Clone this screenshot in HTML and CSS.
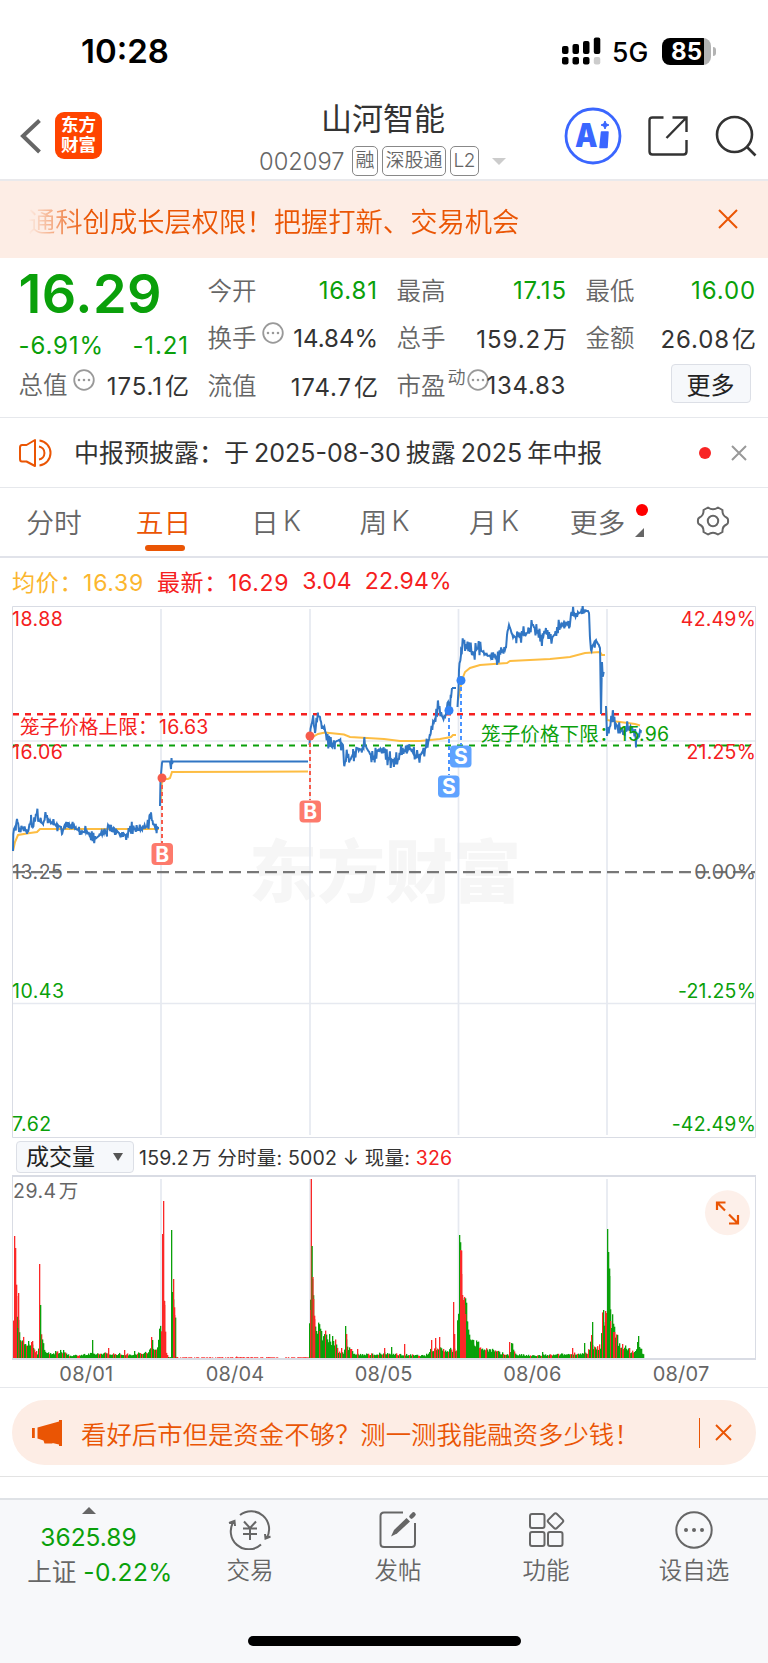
FILE: index.html
```html
<!DOCTYPE html>
<html lang="zh-CN">
<head>
    <meta charset="UTF-8">
    <meta name="viewport" content="width=device-width, initial-scale=1.0">
    <title>山河智能 002097</title>
    <link rel="stylesheet" href="styles.css">
</head>
<body>
    <div class="status-bar">
        <span class="time">10:28</span>
        <div class="status-right">
            <svg width="39" height="28" viewBox="0 0 39 28">
                <rect x="0" y="9" width="6.5" height="8" rx="2"/>
                <rect x="10.5" y="7" width="6.5" height="10" rx="2"/>
                <rect x="21" y="4" width="6.5" height="13" rx="2"/>
                <rect x="31.8" y="0.5" width="6.5" height="16.5" rx="2"/>
                <rect x="0" y="20" width="6.5" height="7.5" rx="2"/>
                <rect x="10.5" y="20" width="6.5" height="7.5" rx="2"/>
                <rect x="21" y="20" width="6.5" height="7.5" rx="2"/>
                <rect x="31.8" y="20" width="6.5" height="7.5" rx="2" fill="#ccc"/>
            </svg>
            <span class="network">5G</span>
            <div class="battery">85</div>
            <div class="battery-tip"></div>
        </div>
    </div>

    <header class="header">
        <svg class="back" width="22" height="36" viewBox="0 0 22 36" fill="none" stroke="#666" stroke-width="4">
            <path d="M19.5 2.5L3 18L19.5 34"/>
        </svg>
        <div class="app-logo">东方<br>财富</div>
        <div class="stock">
            <h1 class="stock-name">山河智能</h1>
            <div class="stock-meta">
                <span class="stock-code">002097</span>
                <span class="tag">融</span>
                <span class="tag">深股通</span>
                <span class="tag">L2</span>
                <i class="arrow-down"></i>
            </div>
        </div>
        <div class="header-icons">
            <svg width="58" height="58" viewBox="0 0 58 58">
                <circle cx="29" cy="29" r="27" fill="none" stroke="#3a66ff" stroke-width="2.8"/>
                <text class="ai-letter" x="11" y="40" textLength="22.5" lengthAdjust="spacingAndGlyphs">A</text>
                <path d="M37.500 25H44L43 40.500H36Z" fill="#3a66ff" stroke="#3a66ff" stroke-width="1.500" stroke-linejoin="round"/>
                <path d="M41 14l1.200 2.800 2.800 1.200-2.800 1.200-1.200 2.800-1.200-2.800-2.800-1.200 2.800-1.200z" fill="#3a66ff" stroke="#3a66ff"/>
            </svg>
            <svg width="40" height="40" viewBox="0 0 40 40" fill="none" stroke="#333" stroke-width="2.4">
                <path d="M15.500 1.500H4.500Q1.500 1.500 1.500 4.500V35.500Q1.500 38.500 4.500 38.500H35.500Q38.500 38.500 38.500 35.500V24"/>
                <path d="M24.500 1.500H38.500V16M38.500 1.500L18.500 22"/>
            </svg>
            <svg class="search" width="42" height="42" viewBox="0 0 42 42" fill="none" stroke="#333" stroke-width="2.6">
                <circle cx="19.500" cy="19.500" r="17.500"/>
                <path d="M31.500 31.500L40.500 40.500"/>
            </svg>
        </div>
    </header>

    <div class="banner">
        <p class="banner-text">通科创成长层权限！把握打新、交易机会</p>
        <svg width="20" height="20" viewBox="0 0 20 20" fill="none" stroke="#ea5504" stroke-width="2">
            <path d="M1 1L19 19M19 1L1 19"/>
        </svg>
    </div>

    <section class="quote">
        <div class="quote-col">
            <div class="price">16.29</div>
            <div class="quote-change green"><span>-6.91%</span><span>-1.21</span></div>
            <div class="quote-row">
                <label>总值</label>
                <svg class="tip" width="22" height="22" viewBox="0 0 22 22"><use href="#dots"/></svg>
                <span>175.1<b>亿</b></span>
            </div>
        </div>
        <div class="quote-col">
            <div class="quote-row"><label>今开</label><span class="green">16.81</span></div>
            <div class="quote-row">
                <label>换手</label>
                <svg class="tip" width="22" height="22" viewBox="0 0 22 22"><use href="#dots"/></svg>
                <span class="low">14.84%</span>
            </div>
            <div class="quote-row"><label>流值</label><span>174.7<b>亿</b></span></div>
        </div>
        <div class="quote-col">
            <div class="quote-row"><label>最高</label><span class="green">17.15</span></div>
            <div class="quote-row"><label>总手</label><span>159.2<b>万</b></span></div>
            <div class="quote-row">
                <label>市盈<sup>动</sup></label>
                <svg class="tip tip-tight" width="22" height="22" viewBox="0 0 22 22"><use href="#dots"/></svg>
                <span class="ratio">134.83</span>
            </div>
        </div>
        <div class="quote-col">
            <div class="quote-row"><label>最低</label><span class="green">16.00</span></div>
            <div class="quote-row"><label>金额</label><span>26.08<b>亿</b></span></div>
            <div class="quote-row"><button class="more-btn">更多</button></div>
        </div>
    </section>

    <div class="notice">
        <svg width="34" height="30" viewBox="0 0 34 30" fill="none" stroke="#ea5504" stroke-width="2">
            <path d="M16 2V28L7.500 23.500H3Q1 23.500 1 21V9.500Q1 7 3 7H7.500Z" stroke-linejoin="round"/>
            <path d="M20 8.500A6.600 6.600 0 0 1 20 21.500M20.500 2.500A12.600 12.600 0 0 1 20.500 27.500"/>
        </svg>
        <p class="notice-text">中报预披露：于<i></i>2025-08-30<i></i>披露<i></i>2025<i></i>年中报</p>
        <span class="red-dot"></span>
        <svg width="16" height="16" viewBox="0 0 16 16" fill="none" stroke="#999" stroke-width="2">
            <path d="M1 1L15 15M15 1L1 15"/>
        </svg>
    </div>

    <nav class="tabs">
        <a class="tab">分时</a>
        <a class="tab active">五日</a>
        <a class="tab">日<i></i>K</a>
        <a class="tab">周<i></i>K</a>
        <a class="tab">月<i></i>K</a>
        <a class="tab tab-more">更多</a>
        <a class="tab">
            <svg width="34" height="32" viewBox="0 0 34 32" fill="none" stroke="#666" stroke-width="2">
                <path d="M12 2.500Q17 6 22 2.500L26.500 5Q26 10.500 30.500 12.500Q32.500 13.500 32 16Q32.500 18.500 30.500 19.500Q26 21.500 26.500 27L22 29.500Q17 26 12 29.500L7.500 27Q8 21.500 3.500 19.500Q1.500 18.500 2 16Q1.500 13.500 3.500 12.500Q8 10.500 7.500 5Z" stroke-linejoin="round"/>
                <circle cx="17" cy="16" r="5.200"/>
            </svg>
        </a>
    </nav>

    <div class="legend">
        <span class="avg">均价：16.39</span>
        <span>最新：16.29</span>
        <span class="num">3.04</span>
        <span class="num">22.94%</span>
    </div>

    <svg class="chart" viewBox="0 606 768 533">
        <text class="watermark" x="249" y="897">东方财富</text>
        <g class="grid">
            <path d="M12.500 606.500H755.500V1137.500H12.500Z"/>
            <path class="thick" d="M161 609V1135M310 609V1135M458.500 609V1135M607 609V1135M13 741H755M13 1003.500H755"/>
        </g>
        <path class="limit-up" d="M13 714.300H753"/>
        <path class="limit-down" d="M13 745.500H753"/>
        <path class="zero" d="M13 872.200H755"/>
        <g class="axis">
            <text class="up" x="12" y="626">18.88</text>
            <text class="up" x="12" y="759">16.06</text>
            <text x="12" y="878.500">13.25</text>
            <text class="down" x="12" y="998">10.43</text>
            <text class="down" x="12" y="1130.500">7.62</text>
            <text class="up end" x="756" y="626">42.49%</text>
            <text class="up end" x="756" y="759">21.25%</text>
            <text class="end" x="756" y="878.500">0.00%</text>
            <text class="down end" x="756" y="998">-21.25%</text>
            <text class="down end" x="756" y="1130.500">-42.49%</text>
            <text class="up limit" x="20" y="733.500">笼子价格上限：<tspan dx="1.500">16.63</tspan></text>
        </g>
        <g id="lines"></g>
        <g class="axis"><text class="down limit" x="481" y="741">笼子价格下限：<tspan dx="1">15.96</tspan></text></g>
        <g class="mark buy">
            <path d="M162 778V843M310 736V800"/>
            <circle cx="162" cy="778" r="4.500"/>
            <circle cx="310" cy="736" r="4.500"/>
            <rect x="151.500" y="843" width="21.500" height="22" rx="4"/>
            <rect x="299.500" y="800.500" width="21.500" height="22" rx="4"/>
            <text x="162.300" y="861.500">B</text>
            <text x="310.300" y="819">B</text>
        </g>
        <g class="mark sell">
            <path d="M449 711V775M461 680V745"/>
            <circle cx="449" cy="710.500" r="4.500"/>
            <circle cx="461" cy="680.500" r="4.500"/>
            <rect x="450" y="745.500" width="21.500" height="22" rx="4"/>
            <rect x="438" y="775.500" width="21.500" height="22" rx="4"/>
            <text x="461" y="764">S</text>
            <text x="449" y="794">S</text>
        </g>
    </svg>

    <div class="volume-head">
        <button class="indicator">成交量<i></i></button>
        <span>159.2<i></i>万 分时量: 5002 ↓ 现量: <em>326</em></span>
    </div>

    <svg class="volume" viewBox="0 1175 768 186">
        <path class="frame" d="M12.500 1176V1359M755.500 1176V1359"/>
        <path class="frame thick" d="M12 1176H756M12 1359H756"/>
        <path class="divider" d="M161 1179V1358M310 1179V1358M458.500 1179V1358M607 1179V1358"/>
        <g id="bars"></g>
        <text class="vol-max" x="13" y="1198">29.4<tspan dx="2">万</tspan></text>
        <circle cx="727.500" cy="1212.700" r="22.500" fill="#fdf0ea"/>
        <path d="M717 1210V1202.500H725.500M717 1202.500L725 1210.500M738 1215V1223.500H729M738 1223.500L729 1214.500" fill="none" stroke="#ea5504" stroke-width="2.2"/>
    </svg>
    <div class="dates">
        <span>08/01</span><span>08/04</span><span>08/05</span><span>08/06</span><span>08/07</span>
    </div>

    <div class="promo-wrap">
        <div class="promo">
            <svg width="31" height="26" viewBox="0 0 31 26" fill="#ea5504">
                <path d="M0 8h2.800v10H0zM5.500 7.500L27 1.500V0H30V26H27V24.500L20.500 23V23.500H12.500L11.500 20.500L5.500 18.500Z"/>
            </svg>
            <p>看好后市但是资金不够？测一测我能融资多少钱！</p>
            <i class="bar"></i>
            <svg width="17" height="17" viewBox="0 0 17 17" fill="none" stroke="#ea5504" stroke-width="1.900">
                <path d="M1 1L16 16M16 1L1 16"/>
            </svg>
        </div>
    </div>

    <footer class="tabbar">
        <div class="index">
            <i class="arrow-up"></i>
            <span class="green">3625.89</span>
            <span class="index-change">上证<b class="green">-0.22%</b></span>
        </div>
        <div class="item">
            <svg width="44" height="40" viewBox="0 0 44 40" fill="none" stroke="#666" stroke-width="2">
                <path d="M12 5A18 18 0 0 1 38.500 28.500M42.500 26.500L37.500 28.500L37 24M33 34.500A18 18 0 0 1 6 11M1 13L6.500 11L7 16"/>
                <path d="M16 11.500L22 18L28 11.500M15 18.500H29M15 24H29M22 18V30"/>
            </svg>
            <span>交易</span>
        </div>
        <div class="item">
            <svg width="40" height="40" viewBox="0 0 40 40" fill="none" stroke="#666" stroke-width="2">
                <path d="M25 2.500H6Q2.500 2.500 2.500 6V33.500Q2.500 37 6 37H33.500Q37 37 37 33.500V13"/>
                <path d="M13 26.500L16 20L28.500 8L32 11.500L19 23.500Z" fill="#666" stroke="none"/>
                <path d="M33.500 6.500L35.500 4.500" stroke-width="4.500" stroke-linecap="round"/>
            </svg>
            <span>发帖</span>
        </div>
        <div class="item">
            <svg width="40" height="40" viewBox="0 0 40 40" fill="none" stroke="#666" stroke-width="2">
                <rect x="4" y="4" width="14.500" height="14" rx="2"/>
                <rect x="4" y="22" width="14.500" height="14" rx="2"/>
                <rect x="22" y="22" width="14.500" height="14" rx="2"/>
                <rect x="23.500" y="5" width="12" height="12" rx="2" transform="rotate(45 29.500 11)"/>
            </svg>
            <span>功能</span>
        </div>
        <div class="item">
            <svg width="40" height="40" viewBox="0 0 40 40" fill="none" stroke="#666" stroke-width="2">
                <circle cx="20" cy="20" r="17.700"/>
                <path d="M12 20h.01M20 20h.01M28 20h.01" stroke-width="4" stroke-linecap="round"/>
            </svg>
            <span>设自选</span>
        </div>
        <div class="home-indicator"></div>
    </footer>

    <svg width="0" height="0" class="defs">
        <defs>
            <g id="dots" fill="none" stroke="#999">
                <circle cx="11" cy="11" r="9.800" stroke-width="1.800"/>
                <path d="M6 11h.01M11 11h.01M16 11h.01" stroke-width="2.600" stroke-linecap="round"/>
            </g>
        </defs>
    </svg>

    <script src="chart.js"></script>
</body>
</html>
```
FILE: styles.css
```css
* {
    margin: 0;
    padding: 0;
    box-sizing: border-box;
}

body {
    width: 768px;
    height: 1663px;
    overflow: hidden;
    background: #fff;
    color: #333;
    font-family: Inter, 'Noto Sans CJK SC', sans-serif;
    font-size: 24px;
}

svg {
    display: block;
    flex-shrink: 0;
}

i, em, b {
    font-style: normal;
    font-weight: inherit;
}

.defs {
    position: absolute;
}

.green {
    color: #0aa00a;
}

/* 状态栏 */
.status-bar {
    height: 92px;
    padding: 10px 52px 0 81px;
    display: flex;
    align-items: center;
    justify-content: space-between;
    color: #000;
}

.time {
    font-size: 33px;
    font-weight: 600;
}

.status-right {
    display: flex;
    align-items: center;
}

.network {
    width: 36px;
    margin: 2px 0 0 11px;
    font-size: 26.5px;
    font-weight: 500;
}

.battery {
    width: 49px;
    height: 27px;
    margin-left: 14px;
    border-radius: 8px;
    background: linear-gradient(90deg, #000 85%, #b3b3b3 85%);
    color: #fff;
    font-size: 24px;
    font-weight: 700;
    line-height: 27px;
    text-align: center;
}

.battery-tip {
    width: 3px;
    height: 9px;
    margin-left: 2px;
    border-radius: 0 4px 4px 0;
    background: #b3b3b3;
}

/* 顶部导航 */
.header {
    height: 89px;
    padding-left: 20px;
    border-bottom: 2px solid #e9e9ec;
    display: flex;
    align-items: center;
}

.app-logo {
    width: 47px;
    height: 47px;
    margin-left: 13px;
    border-radius: 9px;
    background: #ff4400;
    color: #fff;
    font-size: 17.5px;
    font-weight: 700;
    line-height: 19.5px;
    padding-top: 3px;
    text-align: center;
}

.stock {
    width: 250px;
    margin-left: 157px;
    height: 100%;
}

.stock-name {
    height: 50px;
    padding-left: 62px;
    font-size: 31px;
    font-weight: 400;
    line-height: 54px;
    white-space: nowrap;
}

.stock-meta {
    height: 38px;
    display: flex;
    align-items: center;
    color: #666;
}

.stock-code {
    width: 93px;
    font-size: 23.7px;
    font-weight: 350;
}

.tag {
    height: 30px;
    margin-right: 4px;
    padding: 0 2.500px;
    border: 1px solid #888;
    border-radius: 5px;
    font-size: 19px;
    font-weight: 350;
    line-height: 27px;
    white-space: nowrap;
}

.tag:last-of-type {
    letter-spacing: -0.4px;
}

.arrow-down {
    margin-left: 9px;
    border: 7px solid transparent;
    border-top-color: #ccc;
    border-bottom: 0;
}

.header-icons {
    display: flex;
    align-items: center;
    margin-left: 55px;
    gap: 25.500px;
}

.search {
    margin-left: 1.5px;
}

.ai-letter {
    font-size: 33px;
    font-weight: 900;
    fill: #3a66ff;
}

/* 滚动广告 */
.banner {
    height: 77px;
    padding: 0 30px 0 28px;
    display: flex;
    align-items: center;
    justify-content: space-between;
    background: #fdede5;
}

.banner-text {
    margin-top: 6px;
    font-size: 27.3px;
    line-height: 40px;
    font-weight: 350;
    color: #ea5504;
    -webkit-mask-image: linear-gradient(90deg, transparent, #000 60px);
    mask-image: linear-gradient(90deg, transparent, #000 60px);
}

.banner svg {
    margin-top: -1px;
}

/* 行情 */
.quote {
    height: 160px;
    padding: 9px 14px 0 18.500px;
    border-bottom: 1px solid #e6e8ec;
    display: grid;
    grid-template-columns: repeat(4, 169px);
    column-gap: 20px;
}

.price {
    height: 55px;
    font-size: 54px;
    font-weight: 600;
    line-height: 54px;
    letter-spacing: 0.5px;
    color: #0aa00a;
}

.quote-change {
    height: 39px;
    margin-right: -1.5px;
    padding-top: 7px;
    display: flex;
    align-items: center;
    justify-content: space-between;
    letter-spacing: 0.9px;
}

.quote-row {
    height: 47.3px;
    display: flex;
    align-items: center;
    white-space: nowrap;
}

.quote-row label {
    margin-top: -2px;
    font-size: 24.5px;
    font-weight: 350;
    color: #666;
}

.quote-row span {
    margin-left: auto;
    margin-right: -1.5px;
    letter-spacing: 0.9px;
}

.quote-row b {
    margin-left: 2px;
    letter-spacing: 0;
}

.quote-row sup {
    font-size: 18px;
    line-height: 0;
    margin-left: 2px;
    vertical-align: 11px;
}

.quote-row .tip {
    margin: -10px 0 0 5px;
}

.quote-row .tip-tight {
    margin-left: 1px;
}

.quote-row .low {
    padding-top: 1px;
    letter-spacing: 0;
}

.quote-row .ratio {
    margin-left: -2px;
    letter-spacing: 0.7px;
}

.more-btn {
    width: 80px;
    height: 39px;
    margin: -4px 4px 0 auto;
    border: 1.500px solid #dcdfe6;
    border-radius: 4px;
    background: #f6f8fb;
    color: #222;
    font: inherit;
}

/* 公告 */
.notice {
    height: 70px;
    padding: 0 21px 0 19px;
    border-bottom: 1.500px solid #e6e8ec;
    display: flex;
    align-items: center;
}

.notice-text {
    margin: -4px 0 0 21px;
    font-size: 25px;
    white-space: nowrap;
}

.notice-text i {
    display: inline-block;
    width: 5px;
}

.red-dot {
    width: 12px;
    height: 12px;
    margin: 0 20px 0 auto;
    border-radius: 50%;
    background: #f82424;
}

/* 周期切换 */
.tabs {
    height: 70px;
    border-bottom: 2px solid #e1e3ea;
    display: grid;
    grid-template-columns: 108px 111px 114px 103px 116px 91px 140px;
    align-items: center;
}

.tab {
    position: relative;
    height: 68px;
    padding-bottom: 2px;
    font-size: 27.800px;
    font-weight: 350;
    color: #666;
    display: flex;
    align-items: center;
    justify-content: center;
}

.tab i {
    width: 4px;
}

.active {
    color: #ea5504;
}

.active::after {
    content: '';
    position: absolute;
    bottom: 5px;
    left: 37px;
    width: 40px;
    height: 6px;
    border-radius: 3px;
    background: #ea5504;
}

.tab-more::before {
    content: '';
    position: absolute;
    top: 16px;
    right: -5px;
    width: 12px;
    height: 12px;
    border-radius: 50%;
    background: #f00;
}

.tab-more::after {
    content: '';
    position: absolute;
    top: 40px;
    right: -1px;
    border-left: 9px solid transparent;
    border-bottom: 9px solid #666;
}

.legend {
    height: 46px;
    margin-bottom: 2px;
    padding-left: 12px;
    display: flex;
    align-items: center;
    gap: 13px;
    font-size: 23px;
    font-weight: 380;
    letter-spacing: 0.7px;
    color: #f52020;
}

.legend .num {
    letter-spacing: 0.1px;
}

.avg {
    color: #fbb62e;
}

/* 走势图 */
.chart {
    width: 768px;
    height: 533px;
}

.grid path,
.frame {
    fill: none;
    stroke: #d9dce4;
    stroke-width: 1;
}

.grid .thick,
.divider {
    stroke: #e6e9f0;
    stroke-width: 1.700;
}

.frame.thick {
    stroke-width: 2;
}

.watermark {
    font-size: 68px;
    font-weight: 900;
    fill: #f6f6f6;
}

.axis text,
.vol-max {
    font-size: 19.500px;
    letter-spacing: 0.5px;
    fill: #666;
}

.axis .up {
    fill: #f52020;
}

.axis .down {
    fill: #0aa00a;
}

.axis .end {
    letter-spacing: 0.2px;
    text-anchor: end;
}

.axis .limit {
    letter-spacing: 0.15px;
}

.limit-up {
    stroke: #f52020;
    stroke-width: 2.600;
    stroke-dasharray: 6 6;
}

.limit-down {
    stroke: #0aa00a;
    stroke-width: 2;
    stroke-dasharray: 6 6;
}

.zero {
    stroke: #777;
    stroke-width: 2.200;
    stroke-dasharray: 12 6;
}

.line-price,
.line-avg {
    fill: none;
    stroke: #3176c4;
    stroke-width: 2;
}

.line-avg {
    stroke: #fdbd42;
}

.mark path {
    stroke-width: 2;
    stroke-dasharray: 4 3;
}

.mark text {
    font-size: 21px;
    font-weight: 700;
    fill: #fff;
    text-anchor: middle;
}

.buy path {
    stroke: #f65b4b;
}

.buy circle {
    fill: #f65b4b;
}

.buy rect {
    fill: #fd7a6c;
}

.sell path {
    stroke: #4a94ff;
}

.sell circle {
    fill: #3383f5;
}

.sell rect {
    fill: #5fa3ff;
}

/* 成交量 */
.volume-head {
    height: 36px;
    padding-left: 16px;
    display: flex;
    align-items: center;
    font-size: 19.500px;
    letter-spacing: 0.2px;
    white-space: nowrap;
}

.volume-head span {
    margin-top: -2px;
}

.volume-head em {
    color: #f52020;
}

.volume-head span i {
    display: inline-block;
    width: 3px;
}

.indicator {
    width: 118px;
    height: 32px;
    margin-right: 5px;
    padding: 0 10px 0 9px;
    border: 1px solid #dcdfe6;
    border-radius: 4px;
    background: #f6f8fb;
    color: #222;
    font: inherit;
    font-size: 23px;
    line-height: 28px;
    display: flex;
    align-items: center;
    justify-content: space-between;
}

.indicator i {
    border: 5px solid transparent;
    border-top: 8px solid #555;
    border-bottom: 0;
}

.volume {
    width: 768px;
    height: 186px;
}

.dates {
    height: 27px;
    padding: 0 0 0 12px;
    border-bottom: 1px solid #e6e8ec;
    display: grid;
    grid-template-columns: repeat(5, 148.700px);
    font-size: 20px;
    line-height: 27px;
    letter-spacing: 0.2px;
    color: #666;
    text-align: center;
}

.promo-wrap {
    height: 89px;
    padding: 12px 12px 0;
    border-bottom: 1px solid #e3e3e3;
}

.promo {
    height: 65px;
    padding: 0 24px 0 20px;
    border-radius: 33px;
    background: #fdede5;
    color: #ea5504;
    font-size: 25.400px;
    font-weight: 350;
    display: flex;
    align-items: center;
}

.promo p {
    margin: 0 0 0 18px;
    white-space: nowrap;
}

.promo .bar {
    width: 1.500px;
    height: 30px;
    margin: 0 15px 0 auto;
    background: #ea5504;
}

/* 底部栏 */
.tabbar {
    height: 165px;
    margin-top: 21px;
    border-top: 2px solid #dfe2e6;
    background: #f7f8fa;
    display: grid;
    grid-template-columns: 176px repeat(4, 1fr);
    grid-template-rows: 136px 10px;
    color: #666;
}

.index {
    display: flex;
    flex-direction: column;
    align-items: center;
    padding: 7px 0 0 1px;
    font-size: 24.500px;
    line-height: 35px;
    white-space: nowrap;
}

.index-change {
    padding-left: 23px;
}

.index b {
    margin-left: 7px;
    letter-spacing: 0.4px;
}

.arrow-up {
    margin-bottom: 6px;
    border: 7px solid transparent;
    border-bottom-color: #666;
    border-top: 0;
}

.item {
    display: flex;
    flex-direction: column;
    align-items: center;
    padding-top: 10px;
    font-size: 23.500px;
    font-weight: 350;
    line-height: 41px;
}

.home-indicator {
    grid-column: 1 / -1;
    justify-self: center;
    width: 273px;
    height: 10px;
    border-radius: 5px;
    background: #000;
}
```
FILE: chart.js
```js
const SVG_NS = 'http://www.w3.org/2000/svg';

let seed = 7;
function rand() {
    seed = (seed * 16807) % 2147483647;
    return seed / 2147483647;
}

// 每日价格 [x, y]，amp 为该日波动幅度
const priceDays = [
    { amp: 5, pts: [[13,851],[13.3,834],[14,829],[16,825],[17,819],[19,831],[22,828],[26,831],[28,832],[31,820],[33,827],[37,812],[39,820],[43,824],[46,816],[50,822],[57,826],[61,827],[62,834],[64,827],[70,826],[76,829],[84,832],[90,834],[95,839],[100,835],[107,832],[108,825],[114,828],[120,834],[127,835],[132,828],[138,830],[143,828],[148,826],[150,814],[153,824],[157,828],[159,828]] },
    { amp: 0, pts: [[160,806],[160.5,780],[162,763],[162.5,761.5],[170,761.5],[171,769],[171.5,758],[172,764],[173,761.5],[308,761.5]] },
    { amp: 7, pts: [[309.5,745],[310.5,729],[312,723],[313,717],[315,733],[316,725],[318,716],[320,717],[322,726],[325,730],[328,741],[332,747],[335,742],[339,740],[343,745],[344,764],[348,756],[350,760],[353,754],[357,748],[362,750],[365,745],[370,754],[375,757],[378,750],[384,750],[389,759],[395,761],[399,759],[402,750],[407,752],[409,747],[413,753],[418,757],[422,753],[427,746],[430,736],[434,722],[437,715],[438,701],[440,712],[443,718],[446,714],[448,702],[450,710],[451,698],[452,688]] },
    { amp: 0, pts: [[452,688],[456,688]] },
    { amp: 7, pts: [[457.5,707],[458.5,690],[459,670],[461,655],[463,641],[465,650],[470,645],[472,655],[478,648],[483,652],[488,656],[492,655],[496,658],[500,653],[506,648],[507,635],[509,625],[512,634],[516,638],[520,636],[525,635],[528,632],[532,624],[536,630],[539,632],[541,639],[545,633],[551,639],[555,634],[559,625],[570,624],[571,614],[576,615],[581,612],[583,611],[588,611],[589,613],[590,638],[591,650],[593,645],[596,640],[600,648],[601,714],[602,662],[603,676],[604,672]] },
    { amp: 7, pts: [[606,706],[607,736],[609,730],[613,711],[616,724],[620,730],[625,731],[630,727],[634,731],[636,742],[638,736],[641,730]] }
];

const avgDays = [
    [[13,851],[15,842],[18,835],[30,833],[37,832],[40,829],[159,829]],
    [[161,800],[162,779],[168,779],[170,778],[172,772],[308,771.5]],
    [[311,738],[318,734],[325,732.5],[344,734.5],[350,737],[384,739],[400,741],[420,741],[440,739],[451,737],[453,735],[456,735]],
    [[458,700],[462,680],[465,672],[470,668],[480,665],[507,663],[510,661],[550,659],[570,657],[585,653],[600,652],[602,655],[605,655]],
    [[606,706],[607,720],[612,721],[620,722],[635,724],[640,725.5]]
];

function valueAt(pts, x) {
    for (let i = 1; i < pts.length; i++) {
        if (x <= pts[i][0]) {
            const [x0, y0] = pts[i - 1];
            const [x1, y1] = pts[i];
            return y0 + (y1 - y0) * (x - x0) / ((x1 - x0) || 1);
        }
    }
    return pts[pts.length - 1][1];
}

function addLine(pts, cls) {
    const path = document.createElementNS(SVG_NS, 'path');
    path.setAttribute('d', 'M' + pts.map(p => p[0].toFixed(1) + ' ' + p[1].toFixed(1)).join('L'));
    path.setAttribute('class', cls);
    document.getElementById('lines').appendChild(path);
}

avgDays.forEach(pts => addLine(pts, 'line-avg'));

priceDays.forEach(day => {
    if (!day.amp) {
        addLine(day.pts, 'line-price');
        return;
    }
    const out = day.pts.slice();
    const last = day.pts[day.pts.length - 1][0];
    let side = 1;
    for (let x = day.pts[0][0] + 2; x < last; x += 0.8) {
        side = -side;
        const r = rand();
        out.push([x, valueAt(day.pts, x) + side * r * r * r * day.amp * 1.3]);
    }
    out.sort((a, b) => a[0] - b[0]);
    addLine(out, 'line-price');
});

// 成交量包络线 [x, 高度] 与单独的尖峰 [x, 高度, 颜色]
const volumeEnv = [
    [13,44],[14,55],[17,45],[18,26],[21,17],[27,13],[32,10],[37,4],[40,24],[42,14],[46,5],[53,4],[64,6],[69,2],[84,3],[100,4],[130,3],[148,5],[151,9],[156,8],[160,26],[161,28],[162,66],[164,56],[166,6],[168,1],[171,1],[172,50],[175,43],[176,1],[180,0.6],[308,0.6],
    [310,48],[312,80],[315,32],[320,21],[330,15],[335,14],[338,6],[343,5],[346,18],[348,8],[354,4],[360,3],[366,3],[390,4],[398,3],[425,2],[430,6],[438,10],[445,7],[456,7],[458,49],[460,100],[463,55],[468,25],[474,14],[484,8],[492,7],[500,4],[508,3],[512,11],[516,3],[530,2],[560,3],[575,4],[587,4],[591,13],[594,8],[600,10],[602,36],[605,38],[607,60],[609,80],[611,34],[614,24],[618,13],[623,10],[630,5],[635,7],[641,7],[643,3]
];
const spikes = [
    [14,122,'r'],[15,110,'r'],[16,62,'r'],[18,65,'r'],[17,30,'g'],[28,17,'g'],[31,16,'r'],[32,17,'r'],[39,94,'r'],[40,53,'g'],[55,7,'g'],[63,8,'g'],[92,18,'g'],[108,10,'r'],[124,8,'r'],[134,7,'g'],[151,21,'r'],[152,18,'g'],[162,124,'r'],[163,157,'r'],[164,57,'r'],
    [171,128,'g'],[172,54,'g'],[173,79,'r'],[174,43,'r'],[236,1.5,'r'],[310,48,'r'],[310.7,179,'r'],[311.5,112,'g'],[312.3,81,'r'],[313,59,'r'],[314,39,'r'],[319,27,'r'],[321,27,'g'],[332,22,'g'],[341,10,'r'],[345,32,'g'],[346,24,'r'],[357,9,'r'],[384,10,'r'],[391,11,'g'],[404,14,'r'],[431,18,'r'],[435,20,'r'],[439,21,'r'],[453,56,'r'],[454,24,'r'],
    [459,123,'g'],[460,108,'r'],[461,84,'r'],[462,63,'r'],[463,58,'r'],[464,53,'r'],[465,44,'r'],[466,37,'g'],[473,18,'g'],[477,16,'g'],[509,16,'r'],[511,15,'g'],[542,6,'g'],[572,10,'r'],[584,15,'g'],[591,23,'r'],[592,36,'g'],[603,48,'g'],[605,47,'r'],[606,45,'r'],[607,129,'g'],[608,106,'g'],[609,82,'g'],[610,37,'r'],[611,30,'g'],[613,26,'r'],[614,26,'r'],[622,14,'r'],[629,10,'r'],[637,16,'g'],[638,22,'g'],[639,11,'g']
];

const bars = document.getElementById('bars');
const colors = { r: '#fb2828', g: '#0aa00a' };

function addBar(x, h, color) {
    const rect = document.createElementNS(SVG_NS, 'rect');
    rect.setAttribute('x', x);
    rect.setAttribute('y', 1358 - h);
    rect.setAttribute('width', 1.3);
    rect.setAttribute('height', h);
    rect.setAttribute('fill', colors[color]);
    bars.appendChild(rect);
}

for (let x = 13; x <= 643; x++) {
    const quiet = x > 175 && x < 309;
    const r = rand();
    const h = valueAt(volumeEnv, x) * (0.85 + r * r * 0.7);
    const red = quiet || (x > 160 && x < 167) || x < 17 || rand() < 0.18;
    if (!quiet || rand() < 0.7) {
        addBar(x, Math.max(h, 0.6), red ? 'r' : 'g');
    }
}
spikes.forEach(s => addBar(s[0], s[1], s[2]));
```
